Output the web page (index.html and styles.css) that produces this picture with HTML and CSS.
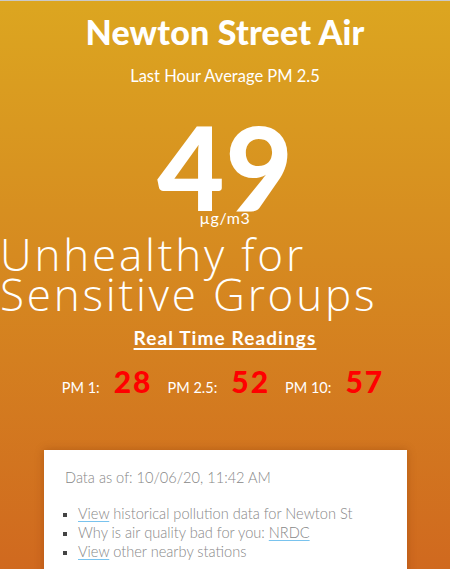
FILE: index.html
```html
<!DOCTYPE html>
<html lang="en">
<head>
<meta charset="utf-8">
<title>Newton Street Air</title>
<link rel="stylesheet" href="styles.css">
</head>
<body>
<main class="page">
  <header class="hero">
    <h1 class="title">Newton Street Air</h1>
    <p class="subtitle">Last Hour Average PM 2.5</p>
    <div class="reading">
      <span class="value">49</span>
      <span class="unit">µg/m3</span>
    </div>
    <h2 class="status">Unhealthy for<br>Sensitive Groups</h2>
    <a class="realtime" href="#">Real Time Readings</a>
    <div class="pm-row">
      <span class="pm-label">PM 1:</span><span class="pm-value">28</span>
      <span class="pm-label">PM 2.5:</span><span class="pm-value">52</span>
      <span class="pm-label">PM 10:</span><span class="pm-value">57</span>
    </div>
  </header>
  <section class="card">
    <p class="asof">Data as of: 10/06/20, 11:42 AM</p>
    <ul class="links">
      <li><a href="#">View</a> historical pollution data for Newton St</li>
      <li>Why is air quality bad for you: <a href="#">NRDC</a></li>
      <li><a href="#">View</a> other nearby stations</li>
    </ul>
  </section>
</main>
</body>
</html>
```
FILE: styles.css
```css
html, body {
  margin: 0;
  padding: 0;
}
body {
  height: 569px;
  overflow: hidden;
  border-top: 1px solid #c9c9c9;
  box-sizing: border-box;
  background: linear-gradient(180deg, #dca620 0%, #d68a20 45%, #d0691f 100%);
  font-family: "Lato", "Open Sans", sans-serif;
  color: #fff;
}
.page {
  display: flex;
  flex-direction: column;
}
.hero {
  display: flex;
  flex-direction: column;
  align-items: center;
  text-align: center;
}
.title {
  margin: 11px 0 0;
  font-size: 34px;
  line-height: 40px;
  font-weight: 900;
  letter-spacing: 0.2px;
}
.subtitle {
  margin: 14px 0 0;
  font-size: 16.5px;
  line-height: 20px;
  font-weight: 400;
}
.reading {
  display: flex;
  flex-direction: column;
  align-items: center;
  margin-top: 36px;
}
.value {
  font-size: 116px;
  line-height: 90px;
  font-weight: 900;
  letter-spacing: 1px;
  margin-right: -1px;
}
.unit {
  font-size: 16px;
  line-height: 16px;
  letter-spacing: 0.6px;
  margin-top: -2px;
}
.status {
  align-self: stretch;
  text-align: left;
  margin: 8px 0 0;
  font-family: "Open Sans", "Lato", sans-serif;
  font-size: 44px;
  line-height: 40px;
  font-weight: 300;
  letter-spacing: 2.8px;
}
.realtime {
  margin-top: 13px;
  color: #fff;
  font-size: 19px;
  line-height: 22px;
  font-weight: 700;
  letter-spacing: 1.1px;
  text-decoration: underline;
  text-decoration-thickness: 2px;
  text-underline-offset: 3px;
}
.pm-row {
  display: flex;
  align-items: baseline;
  margin-top: 14px;
  margin-left: -4px;
}
.pm-label {
  font-size: 14.5px;
  margin-right: 14px;
}
.pm-value {
  color: #ff0000;
  font-size: 30px;
  font-weight: 900;
  letter-spacing: 2px;
  margin-right: 15px;
}
.pm-value:last-child {
  margin-right: 0;
}
.card {
  margin: 51px 43px 0 44px;
  background: #fff;
  padding: 18px 21px 20px;
  box-shadow: 0 0 8px rgba(120, 50, 0, 0.35);
  color: #878787;
  font-weight: 300;
  font-size: 14.6px;
}
.asof {
  margin: 0;
  line-height: 20px;
}
.links {
  margin: 16px 0 0;
  padding: 0 0 0 13px;
  list-style: square;
  line-height: 19px;
}
.links li::marker {
  color: #444;
  font-size: 13px;
}
.links a {
  color: #878787;
  text-decoration: underline;
  text-decoration-color: #79c3ee;
  text-underline-offset: 2px;
}
```
